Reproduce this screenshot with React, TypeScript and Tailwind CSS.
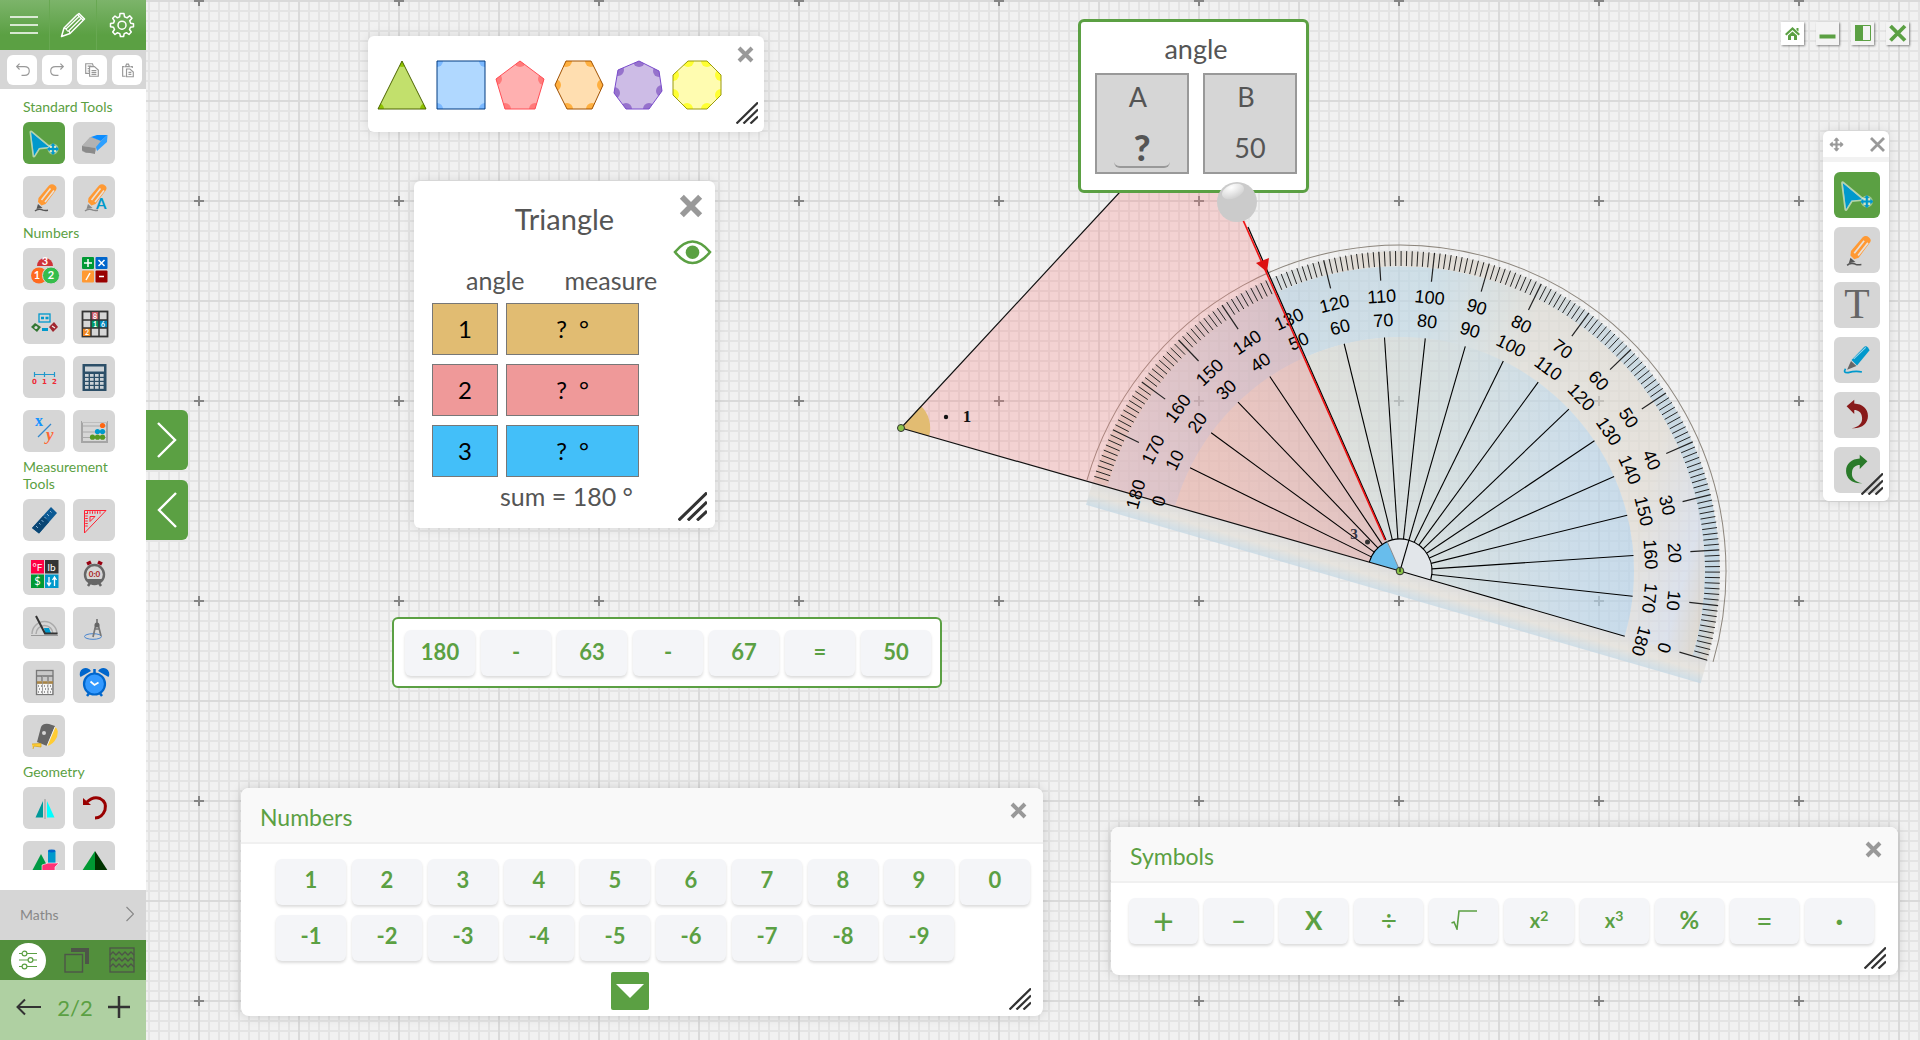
import { useState } from 'react';
import type { ReactNode } from 'react';
import clsx from 'clsx';

// --- GEOMETRY HELPERS ---
const polar = (r: number, deg: number) => {
  const a = (deg * Math.PI) / 180;
  return [r * Math.cos(a), -r * Math.sin(a)];
};

const halfRing = (r: number) => `M ${-r} 0 A ${r} ${r} 0 0 1 ${r} 0`;

// --- SHARED ICONS ---
const MoveGlyph = ({ color = '#0099cc' }: { color?: string }) => (
  <g fill="none" stroke={color} strokeWidth="1.8">
    <path d="M0 -5V5M-5 0H5" />
    <path d="M-2 -3.4L0 -5.6L2 -3.4ZM-2 3.4L0 5.6L2 3.4ZM-3.4 -2L-5.6 0L-3.4 2ZM3.4 -2L5.6 0L3.4 2Z" fill={color} strokeWidth="0.6" />
  </g>
);

const CursorIcon = () => (
  <>
    <g stroke="#ffffff" strokeOpacity="0.55" strokeWidth="3" strokeLinejoin="round" fill="#fff">
      <path d="M8 10L26 25L16 26L11 34Z" />
      <circle cx="30" cy="27" r="4" strokeOpacity="0.4" fillOpacity="0.6" />
    </g>
    <path d="M8 10L26 25L16 26L11 34Z" fill="#0099cc" />
    <g transform="translate(30 27)"><MoveGlyph /></g>
  </>
);

const PencilIcon = ({ tip = '#555555' }: { tip?: string }) => (
  <>
    <path d="M15 26L15.5 22L26 9.5Q29 7 32 9.5Q34.5 11.5 33 14L22.5 28L18.5 29.5Z" fill="#ff9933" />
    <path d="M18.5 24L27.5 12.5M22 26L31 14.5" stroke="#e8e0d8" strokeWidth="1.6" />
    <path d="M15 28L19.5 32L13.5 33Z" fill={tip} />
    <path d="M12 35C14 33 18 33 20 34.2Q22 34.8 25 34.3" stroke={tip} strokeWidth="1.4" fill="none" />
  </>
);

const ResizeHandle = ({ className, size = 22 }: { className: string; size?: number }) => (
  <svg viewBox="0 0 22 22" width={size} height={size} className={clsx('absolute', className)}>
    <path d="M0.5 21.5L22 0.5M7.5 21.5L22 7.5M14.5 21.5L22 14.5" stroke="#333333" strokeWidth="2.3" />
  </svg>
);

const CloseButton = ({ className, size = 17, thin = false }: { className?: string; size?: number; thin?: boolean }) => (
  <button type="button" aria-label="Close" className={clsx('block', className)}>
    <svg viewBox="0 0 17 17" width={size} height={size}>
      <path d="M2 2L15 15M15 2L2 15" stroke="#999999" strokeWidth={thin ? 2.8 : 4} />
    </svg>
  </button>
);

// --- SIDEBAR TOOL ICONS (42 x 42 box) ---
const icons: Record<string, ReactNode> = {
  select: <CursorIcon />,
  eraser: (
    <>
      <path d="M9 24L18 15L29 19L24 25L22 31L13 31L9 29Z" fill="#a2a2a2" />
      <path d="M9 24L22 26L22 32L12 30L9 28Z" fill="#8a8a8a" />
      <path d="M17 15L28 19L23 26L9 24Z" fill="#b2b2b2" />
      <path d="M18 15L24 13H34.500L28 19Z" fill="#0d8dff" />
      <path d="M28 19L34.500 13L34 20L24 29L23 25Z" fill="#2ea0ff" />
    </>
  ),
  pencil: <PencilIcon />,
  pencilText: (
    <>
      <PencilIcon tip="#888888" />
      <text x="23" y="33" fontSize="15" fontWeight="700" fill="#0099cc" fontFamily="Lato, sans-serif">A</text>
    </>
  ),
  balls: (
    <>
      <path d="M14 18A8 8 0 0 1 30 18Z" fill="#d03238" />
      <circle cx="16" cy="27.5" r="8" fill="#ff6a1f" />
      <circle cx="28" cy="27.5" r="8.5" fill="#35bd4b" stroke="#d6d6d6" />
      <g fill="#fff" fontFamily="Lato, sans-serif" fontSize="11" fontWeight="700" textAnchor="middle">
        <text x="22" y="17">3</text>
        <text x="14" y="31">1</text>
        <text x="28" y="31">2</text>
      </g>
    </>
  ),
  operators: (
    <>
      <rect x="9" y="9" width="12" height="12" rx="1" fill="#009933" />
      <rect x="22.5" y="9" width="12" height="12" rx="1" fill="#0066cc" />
      <rect x="9" y="22.5" width="12" height="12" rx="1" fill="#ff9933" />
      <rect x="22.5" y="22.5" width="12" height="12" rx="1" fill="#990000" />
      <path d="M15 11V19M11 15H19M25.5 12L31.5 18M31.5 12L25.5 18M17 25L13 32M26 28.5H31" stroke="#fff" strokeWidth="1.5" />
    </>
  ),
  robots: (
    <>
      <rect x="16" y="12" width="11" height="8" fill="none" stroke="#0099cc" strokeWidth="1.3" />
      <path d="M18 16H21M22.5 16H25.5" stroke="#0099cc" strokeWidth="2.5" />
      <path d="M19 27.5H25" stroke="#0099cc" strokeWidth="3" />
      <path d="M8 25L12 21L18 25L14 30Z" fill="#337733" />
      <circle cx="13" cy="25.5" r="1.6" fill="#ddd" />
      <path d="M26 25L31 20L35 25L30 30Z" fill="#a12830" />
      <path d="M29 24L32 26" stroke="#eee" strokeWidth="1.2" />
    </>
  ),
  sudoku: (
    <>
      <rect x="9.5" y="9.5" width="25" height="25" fill="#d6d6d6" stroke="#333" strokeWidth="1.8" />
      <rect x="18" y="10" width="8" height="8" fill="#c85864" />
      <rect x="18" y="18" width="8" height="8" fill="#009966" />
      <rect x="26" y="18" width="8" height="8" fill="#0088bb" />
      <rect x="10" y="26" width="8" height="8" fill="#ee8822" />
      <path d="M18 10V34M26 10V34M10 18H34M10 26H34" stroke="#333" strokeWidth="1.5" />
      <g fill="#fff" fontFamily="Lato, sans-serif" fontSize="7" fontWeight="700" textAnchor="middle">
        <text x="22" y="16.5">8</text>
        <text x="22" y="24.5">1</text>
        <text x="30" y="24.5">6</text>
        <text x="14" y="32.5">2</text>
      </g>
    </>
  ),
  numberLine: (
    <>
      <path d="M11 18.5H32M11.5 16V21M21.5 16V21M31.5 16V21" stroke="#2299cc" strokeWidth="1.2" />
      <g fill="#ee2a35" fontFamily="'DejaVu Sans', sans-serif" fontSize="7" fontWeight="700" textAnchor="middle">
        <text x="11.5" y="28">0</text>
        <text x="21.5" y="28">1</text>
        <text x="31.5" y="28">2</text>
      </g>
    </>
  ),
  calculator: (
    <>
      <rect x="9.5" y="8" width="24" height="27" fill="#2c4f68" />
      <rect x="12" y="10.5" width="19" height="5" fill="#ccd2d6" />
      {[0, 1, 2, 3].map((r) =>
        [0, 1, 2, 3].map((c) => <rect key={`${r}${c}`} x={12 + c * 5} y={18 + r * 4} width="3.6" height="2.8" fill="#ccd2d6" />)
      )}
    </>
  ),
  fraction: (
    <>
      <path d="M15 27L28 14" stroke="#3388cc" strokeWidth="1.2" />
      <text x="12" y="16" fontSize="16" fontWeight="700" fill="#1493ff" fontFamily="Liberation Serif, serif">x</text>
      <text x="23" y="30" fontSize="17" fontStyle="italic" fontWeight="700" fill="#ff6633" fontFamily="Liberation Serif, serif">y</text>
    </>
  ),
  abacus: (
    <>
      <rect x="9" y="12" width="25" height="20" fill="#d6d6d6" stroke="#a5a5a5" strokeWidth="2" />
      <path d="M9 11H34" stroke="#d6d6d6" strokeWidth="3" />
      <path d="M10 16H33M10 22H33M10 27.5H33" stroke="#aaa" />
      <circle cx="29.5" cy="15.5" r="2.6" fill="#ff6611" />
      <circle cx="24.5" cy="21.5" r="2.6" fill="#0099cc" />
      <circle cx="29.5" cy="21.5" r="2.6" fill="#0099cc" />
      <circle cx="19.5" cy="27.2" r="2.6" fill="#559922" />
      <circle cx="24.5" cy="27.2" r="2.6" fill="#559922" />
      <circle cx="29.5" cy="27.2" r="2.6" fill="#559922" />
    </>
  ),
  ruler: (
    <>
      <path d="M9 29L28 8L34 14L16 34.5Z" fill="#0c5a94" />
      <path d="M9 29L20 17L26 23L16 34.5Z" fill="#0a4674" />
      <path d="M13 27L15 29M16 24L17.5 25.5M18.5 21L20.5 23M21.5 18L23 19.5M24 15L26 17M27 12L28.5 13.5" stroke="#8ab4d4" />
    </>
  ),
  setSquare: (
    <>
      <path d="M11.5 11.5H33L11.5 34Z" fill="none" stroke="#ff2233" />
      <path d="M14 13.5H28" stroke="#ff2233" strokeWidth="2.5" strokeDasharray="1 1.5" />
      <path d="M13.5 14V29" stroke="#ff2233" strokeWidth="2.5" strokeDasharray="1 1.5" />
      <path d="M17 17.5H22L17 22.5Z" fill="none" stroke="#ff2233" />
    </>
  ),
  converter: (
    <>
      <rect x="8" y="7" width="13" height="13.5" fill="#ff0044" />
      <rect x="22" y="7" width="13.5" height="13.5" fill="#333333" />
      <rect x="8" y="21.5" width="13" height="13.5" fill="#009933" />
      <rect x="22" y="21.5" width="13.5" height="13.5" fill="#0099cc" />
      <g fill="#fff" fontFamily="Lato, sans-serif" fontSize="10" textAnchor="middle">
        <text x="14.5" y="17.5">°F</text>
        <text x="28.5" y="17.5">lb</text>
        <text x="14.5" y="32" fontSize="11">$</text>
      </g>
      <path d="M26 24V32M24 29.5L26 32.5L28 29.5M31.5 33V25M29.5 27L31.5 24L33.5 27" stroke="#fff" strokeWidth="1.3" fill="none" />
    </>
  ),
  stopwatch: (
    <>
      <path d="M14 11L18 9M29 11L25 9" stroke="#990011" strokeWidth="3.5" />
      <path d="M15 33L17 30M28 33L26 30" stroke="#666" strokeWidth="2.5" />
      <circle cx="21.5" cy="21.5" r="9.5" fill="#d6d6d6" stroke="#666" strokeWidth="2.4" />
      <path d="M13 26H30A9.5 9.5 0 0 1 13 26Z" fill="#666" />
      <text x="21.5" y="24" fontSize="8" fontWeight="700" textAnchor="middle" fill="#aa2222" fontFamily="Lato, sans-serif">0:0</text>
    </>
  ),
  protractor: (
    <>
      <path d="M9 27A12.5 12.5 0 0 1 34 27M13 27A8.5 8.5 0 0 1 30 27" fill="none" stroke="#aaaaaa" strokeWidth="1.5" />
      <path d="M21 21H26L28 26H22Z" fill="#0099cc" />
      <path d="M13 9L22 26.5H34.5" fill="none" stroke="#333" strokeWidth="2" />
      <path d="M8 28.5H35" stroke="#999" />
    </>
  ),
  compass: (
    <>
      <ellipse cx="20" cy="29.5" rx="8.5" ry="2.8" fill="none" stroke="#4a86d0" />
      <path d="M24 12V16M23 17L20 30M25 17L28 29M21 22H27" stroke="#777" strokeWidth="1.7" />
      <circle cx="24" cy="18" r="2.5" fill="#666" />
    </>
  ),
  probability: (
    <>
      <rect x="13.5" y="9.5" width="16.5" height="24" fill="#c8c8c8" stroke="#777" strokeWidth="1.3" />
      <path d="M14 15H30M19 15V20M25 15V20" stroke="#777" strokeWidth="1.3" />
      <path d="M14 21.5H30" stroke="#a98445" strokeWidth="2.5" />
      <rect x="14.5" y="23" width="14.5" height="10" fill="#f6f6f6" />
      <path d="M15 25H29M16 28H29M15 31H29" stroke="#444" strokeDasharray="1 2" />
      <path d="M19.5 15V33M25 15V33" stroke="#999" strokeWidth="0.8" />
    </>
  ),
  clock: (
    <>
      <path d="M7.5 16A6 6 0 0 1 18 10ZM35.5 16A6 6 0 0 0 25 10Z" fill="#0066cc" />
      <path d="M14 35L17 31M29 35L26 31M21.5 8V12" stroke="#0066cc" strokeWidth="2.5" />
      <circle cx="21.5" cy="23" r="10.5" fill="#3399ff" stroke="#0066cc" strokeWidth="2.2" />
      <path d="M17.5 20.5L21.5 24L25.5 21.5" fill="none" stroke="#fff" strokeWidth="1.8" />
    </>
  ),
  tape: (
    <>
      <path d="M18 12Q20 8 26 9L32 11L24 31L14 27Z" fill="#666" />
      <path d="M32 12Q36 14 34 22Q30 30 24 31Z" fill="#ffcc33" />
      <path d="M32 12L24 31" stroke="#eee" />
      <circle cx="21" cy="18" r="2" fill="#d6d6d6" />
      <path d="M9 29L18 28.5V32L11 31L10 34" fill="#ffcc33" stroke="#d8a822" strokeWidth="0.8" />
    </>
  ),
  reflect: (
    <>
      <path d="M12.5 30.5L20 14V30.5Z" fill="#009999" />
      <path d="M31.5 30.5L24 14V30.5Z" fill="#00ffff" />
      <path d="M22 12V32" stroke="#aaa" strokeWidth="1.5" />
    </>
  ),
  rotate: (
    <>
      <path d="M14 15Q20 9 27 11.5Q34 15 32 23Q29 31 22 31" fill="none" stroke="#990000" strokeWidth="3" />
      <path d="M10 11V18L18 18Z" fill="#990000" />
    </>
  ),
  solids: (
    <>
      <path d="M9 30L18 13L27 30Z" fill="#009944" />
      <rect x="25" y="10" width="7.5" height="14" fill="#0099cc" />
      <ellipse cx="28.7" cy="10" rx="3.7" ry="1.4" fill="#0066cc" />
      <path d="M19 24L25 22H36L32 26V30H19Z" fill="#ff3377" stroke="#fff" strokeWidth="0.6" />
    </>
  ),
  pyramid: (
    <>
      <path d="M22 10L9 30H22Z" fill="#009933" />
      <path d="M22 10L35 30H22Z" fill="#003300" />
    </>
  ),
};

const groups = [
  { title: 'Standard Tools', tools: ['select', 'eraser', 'pencil', 'pencilText'] },
  { title: 'Numbers', tools: ['balls', 'operators', 'robots', 'sudoku', 'numberLine', 'calculator', 'fraction', 'abacus'] },
  {
    title: 'Measurement Tools',
    tools: ['ruler', 'setSquare', 'converter', 'stopwatch', 'protractor', 'compass', 'probability', 'clock', 'tape'],
  },
  { title: 'Geometry', tools: ['reflect', 'rotate', 'solids', 'pyramid'] },
];

// --- SIDEBAR ---
const Sidebar = () => {
  const [active, setActive] = useState('select');

  return (
    <aside className="flex h-full w-[146px] shrink-0 flex-col bg-white">
      <div className="grid h-[50px] shrink-0 grid-cols-3 bg-linear-to-b from-[#7cb46a] to-[#5ba043] to-70%">
        <button type="button" aria-label="Menu" className="grid place-items-center">
          <svg viewBox="0 0 28 18" className="h-[18px] w-7">
            <path d="M0 1H28M0 9H28M0 17H28" stroke="#fff" strokeWidth="1.6" />
          </svg>
        </button>
        <button type="button" aria-label="Edit" className="grid place-items-center border-x border-[#68a852]">
          <svg viewBox="0 0 26 26" className="size-[26px]" fill="none" stroke="#fff" strokeWidth="1.5" strokeLinejoin="round">
            <path d="M1.5 24.5L4 16L17 3L19 1.5L24.5 7L10 21.5Z" />
            <path d="M4 16L6 17L7.5 19L9.5 19.5L10 21.5M6 17L19 4.5M8.5 19L21.5 6M17.5 2.5L23 8" strokeWidth="1.2" />
          </svg>
        </button>
        <button type="button" aria-label="Settings" className="grid place-items-center">
          <svg viewBox="0 0 26 26" className="size-[26px]" fill="none" stroke="#fff" strokeWidth="1.5" strokeLinejoin="round">
            <path d="M11 1.5H15L15.5 4.8L18 5.9L20.7 3.8L23 6.2L20.7 8.8L21.7 11.2L24.5 11.7V14.8L21.5 15.3L20.5 17.5L22.3 20L20 22.5L17.4 20.7L15.2 21.6L14.6 24.5H11.4L10.8 21.6L8.5 20.7L6 22.5L3.7 20L5.5 17.5L4.5 15.3L1.5 14.8V11.6L4.5 11.1L5.4 8.9L3.7 6.3L6 4L8.4 5.8L10.6 4.9Z" />
            <circle cx="13" cy="13.2" r="4" />
          </svg>
        </button>
      </div>

      <div className="flex h-[39px] shrink-0 items-center gap-[5px] bg-[#d6d6d6] pl-[7px]">
        {[
          { name: 'Undo', art: <path d="M10 12H18Q23 12 23 16.5T18 21H15M13 9L10 12L13 15" /> },
          { name: 'Redo', art: <path d="M22 12H14Q9 12 9 16.5T14 21H17M19 9L22 12L19 15" /> },
          {
            name: 'Copy',
            art: <path d="M13 19H9V9H16L17 12M13 12H18L22 15.5V22H13ZM11 11.5H15M11 14H12.5M11 16.5H12.5M15 16H20M15 18H20M15 20H20" />,
          },
          {
            name: 'Paste',
            art: <path d="M14 22H11V12H13M19 12H21V13.5M14 12L15 9.5H17L18 12ZM15 14.5H18.5L22 17.5V22.5H15ZM17 18H20M17 20H20" />,
          },
        ].map((b) => (
          <button key={b.name} type="button" aria-label={b.name} className="size-[30px] rounded-md bg-white">
            <svg viewBox="0 0 31 31" className="size-full" fill="none" stroke="#999" strokeWidth="1.2">{b.art}</svg>
          </button>
        ))}
      </div>

      <nav className="mb-5 min-h-0 flex-1 overflow-hidden pt-[9px] pl-[23px]">
        {groups.map((g) => (
          <section key={g.title} className="mb-1.5">
            <h2 className="mb-[7px] w-[100px] text-[14px] leading-[17px] text-[#5ba043]">{g.title}</h2>
            <div className="grid grid-cols-[42px_42px] gap-x-2 gap-y-3">
              {g.tools.map((t) => (
                <button
                  key={t}
                  type="button"
                  aria-label={t}
                  onClick={() => setActive(t)}
                  className={clsx('size-[42px] rounded-md', active === t ? 'bg-[#5ba043]' : 'bg-[#d6d6d6]')}
                >
                  <svg viewBox="0 0 42 42" className="size-full">{icons[t]}</svg>
                </button>
              ))}
            </div>
          </section>
        ))}
      </nav>

      <button type="button" className="flex h-[50px] shrink-0 items-center justify-between bg-[#d6d6d6] pr-3 pb-0.5 pl-5 text-[14px] text-[#888888]">
        Maths
        <svg viewBox="0 0 8 16" className="h-4 w-2" fill="none" stroke="#888" strokeWidth="1.2"><path d="M0.5 1L7.5 8L0.5 15" /></svg>
      </button>

      <div className="grid h-10 shrink-0 grid-cols-[56px_42px_48px] items-center justify-items-center bg-[#528f3c]">
        <button type="button" aria-label="Tools" className="grid size-[35px] place-items-center rounded-full bg-white">
          <svg viewBox="0 0 20 20" className="size-5" fill="none" stroke="#5ba043" strokeWidth="1.2">
            <path d="M1 3.5H4M9 3.5H19M1 10H10M15 10H19M1 16.5H4M9 16.5H19" />
            <circle cx="6.5" cy="3.5" r="2.4" /><circle cx="12.5" cy="10" r="2.4" /><circle cx="6.5" cy="16.5" r="2.4" />
          </svg>
        </button>
        <button type="button" aria-label="Layers">
          <svg viewBox="0 0 26 26" className="size-[26px]">
            <path d="M7 1H25V17H21V5H7Z" fill="#4d5548" />
            <rect x="1" y="7.5" width="17.5" height="17.5" fill="none" stroke="#4d5548" strokeWidth="1.4" />
          </svg>
        </button>
        <button type="button" aria-label="Backgrounds">
          <svg viewBox="0 0 26 26" className="size-[26px]" fill="none" stroke="#4d5548" strokeWidth="1.3">
            <rect x="1" y="1" width="24" height="24" />
            <path d="M1 8L4 5L7 8L10 5L13 8L16 5L19 8L22 5L25 8M1 14L4 11L7 14L10 11L13 14L16 11L19 14L22 11L25 14M1 20L4 17L7 20L10 17L13 20L16 17L19 20L22 17L25 20" />
          </svg>
        </button>
      </div>

      <div className="flex h-[60px] shrink-0 items-center justify-between bg-[#afd0a2] px-4 pb-1.5">
        <button type="button" aria-label="Previous page">
          <svg viewBox="0 0 26 18" className="h-[18px] w-[26px]" fill="none" stroke="#333" strokeWidth="2"><path d="M1 9H25M9 1.5L1.5 9L9 16.5" /></svg>
        </button>
        <span className="text-[22px] text-[#5ba043]">2/2</span>
        <button type="button" aria-label="Add page">
          <svg viewBox="0 0 22 22" className="size-[22px]" stroke="#333" strokeWidth="2.5"><path d="M11 0V22M0 11H22" /></svg>
        </button>
      </div>
    </aside>
  );
};

// --- PROTRACTOR ---
const TILT = 16.2;
const ARM = 130; // the red arm runs along this division
const ticks = Array.from({ length: 180 }, (_, i) => i).filter((d) => d !== ARM);
const tens = Array.from({ length: 19 }, (_, i) => i * 10);

const Protractor = () => (
  <g transform={`translate(1400 571) rotate(${TILT})`}>
    {ticks.map((d) => {
      const long = d % 10 === 0;
      const [x1, y1] = polar(320, d);
      const [x2, y2] = polar(long ? 291 : 305, d);
      return <line key={d} x1={x1} y1={y1} x2={x2} y2={y2} stroke="#222" strokeWidth={long ? 1.2 : 0.9} />;
    })}
    {tens.filter((d) => d !== ARM && d !== 180).map((d) => {
      const [x1, y1] = polar(d === 90 ? 0 : 32, d);
      const [x2, y2] = polar(234, d);
      return <line key={d} x1={x1} y1={y1} x2={x2} y2={y2} stroke="#000" strokeWidth="1.1" />;
    })}
    <g fontFamily="'Liberation Sans Narrow', 'Liberation Sans', sans-serif" fontSize="18" textAnchor="middle" fill="#000">
      {tens.map((d) => (
        <g key={d} transform={`rotate(${90 - d})`}>
          <text x="0" y="-269">{d}</text>
          <text x="0" y="-245">{180 - d}</text>
        </g>
      ))}
    </g>
    <path d={halfRing(32)} fill="none" stroke="#000" strokeWidth="1.1" />
    <line x1="0" y1="0" x2="32" y2="0" stroke="#000" />
  </g>
);

// --- GRID, TRIANGLE AND PROTRACTOR DRAWING ---
const CanvasArt = () => (
  <svg className="absolute inset-0 size-full">
    <defs>
      <pattern id="minor" width="10" height="10" patternUnits="userSpaceOnUse">
        <path d="M0 1H10M9 0V10" stroke="#e4e4e4" strokeWidth="2" />
      </pattern>
      <pattern id="major" width="100" height="100" patternUnits="userSpaceOnUse">
        <path d="M0 1H100M99 0V100" stroke="#dadada" strokeWidth="2" />
      </pattern>
      <pattern id="cross" x="100" y="-100" width="200" height="200" patternUnits="userSpaceOnUse">
        <path d="M94 101H104M99 96V106" stroke="#868686" strokeWidth="2" />
      </pattern>
      <linearGradient id="band" gradientUnits="userSpaceOnUse" x1="-305" y1="0" x2="305" y2="0">
        <stop offset="0" stopColor="#cfdbe2" />
        <stop offset="0.2" stopColor="#bcd2e0" />
        <stop offset="0.42" stopColor="#c0d8e4" />
        <stop offset="0.6" stopColor="#dedcd4" />
        <stop offset="0.85" stopColor="#e1dcd3" />
        <stop offset="0.95" stopColor="#d3dbea" />
        <stop offset="1" stopColor="#d7cfc2" />
      </linearGradient>
      <linearGradient id="rim" gradientUnits="userSpaceOnUse" x1="-320" y1="0" x2="320" y2="0">
        <stop offset="0" stopColor="#dcd2c2" />
        <stop offset="0.14" stopColor="#c2d4de" />
        <stop offset="0.3" stopColor="#ddd5ca" />
        <stop offset="0.5" stopColor="#dbd6cd" />
        <stop offset="0.7" stopColor="#bfd2dc" />
        <stop offset="0.97" stopColor="#b3cee0" />
        <stop offset="1" stopColor="#d2c8b9" />
      </linearGradient>
      <linearGradient id="core" gradientUnits="userSpaceOnUse" x1="-234" y1="0" x2="234" y2="-100">
        <stop offset="0" stopColor="#e0dacd" />
        <stop offset="0.35" stopColor="#d4d8d4" />
        <stop offset="0.55" stopColor="#cbd8da" />
        <stop offset="0.8" stopColor="#bed6e6" />
        <stop offset="1" stopColor="#b4d1e9" />
      </linearGradient>
      <linearGradient id="strip" x1="0" y1="0" x2="0" y2="1">
        <stop offset="0" stopColor="#dadada" />
        <stop offset="0.5" stopColor="#e3dfd7" />
        <stop offset="1" stopColor="#c0d6e4" />
      </linearGradient>
      <radialGradient id="shine" cx="0.5" cy="0.2" r="0.8">
        <stop offset="0" stopColor="#fff" />
        <stop offset="1" stopColor="#d0d0d0" />
      </radialGradient>
    </defs>

    <rect width="100%" height="100%" fill="#f1f1f1" />
    <g transform="translate(-146 0)">
      <rect width="4000" height="3000" fill="url(#minor)" />
      <rect width="4000" height="3000" fill="url(#major)" />
      <rect width="4000" height="3000" fill="url(#cross)" />

      <g transform={`translate(1400 571) rotate(${TILT})`} fill="none">
        <g opacity="0.68">
          <path d={halfRing(312)} stroke="url(#rim)" strokeWidth="15" />
          <path d={halfRing(269)} stroke="url(#band)" strokeWidth="71" />
          <path d={`${halfRing(234)} Z`} fill="url(#core)" />
          <rect x="-320" y="0" width="640" height="24" fill="url(#strip)" />
        </g>
        <path d={halfRing(326)} stroke="#8c857c" strokeWidth="1" />
        <path d={`${halfRing(32)} Z`} fill="#e2e6ea" />
      </g>

      <path d="M901 428L1196 110L1400 571Z" fill="#f88383" fillOpacity="0.28" />
      <path d="M901 428L921 406A30 30 0 0 1 929 436Z" fill="#e2bc72" />
      <path d="M1400 571L1369 562A32 32 0 0 1 1387 542Z" fill="#68bdec" />
      <path d="M1400 571L901 428L1196 110" fill="none" stroke="#111" strokeWidth="1.2" />

      <Protractor />

      <path d="M1248 227L1386 540" stroke="#000" strokeWidth="1.2" />
      <path d="M1235 202L1385 540" stroke="#ee1111" strokeWidth="1.6" />
      <path d="M1387 541L1400 571" stroke="#777" strokeWidth="0.8" />
      <path d="M1256 263L1269 258L1267 272Z" fill="#dd1111" />
      <circle cx="901" cy="428" r="3.5" fill="#8bc34a" stroke="#333" />
      <circle cx="1400" cy="571" r="3.8" fill="#8bc34a" stroke="#333" />
      <path d="M1400 568V572" stroke="#000" />
      <g fontFamily="'Liberation Serif', serif" fontWeight="700" fill="#111" textAnchor="middle">
        <circle cx="946" cy="417" r="2.2" />
        <text x="967" y="422" fontSize="17">1</text>
        <circle cx="1367.5" cy="542" r="2.5" fill="#333" />
        <text x="1354" y="539" fontSize="15" fill="#33333f">3</text>
      </g>
    </g>
  </svg>
);

// --- FLOATING WIDGETS ---
const polygons = [
  { id: 'tri', points: '25,1 49,49 1,49', fill: '#c2e06c', corner: '#8fc400', stroke: '#4c6400' },
  { id: 'sq', points: '1,1 49,1 49,49 1,49', fill: '#b0d8ff', corner: '#7ab8ff', stroke: '#003a80' },
  { id: 'pent', points: '25,1 49,19 40,49 10,49 1,19', fill: '#ffb0b0', corner: '#ff7a7a', stroke: '#ff4d55' },
  { id: 'hex', points: '12,1 37,1 49,25 38,49 13,49 1,25', fill: '#ffdeb0', corner: '#ffb040', stroke: '#a05000' },
  { id: 'hept', points: '26,1 46,11 49,31 36,49 13,49 1,33 5,10', fill: '#cdbce6', corner: '#9672cc', stroke: '#7a4ccc' },
  { id: 'oct', points: '16,1 35,1 49,15 49,35 35,49 15,49 1,35 1,15', fill: '#fffcb0', corner: '#ffff33', stroke: '#9a9a10' },
];

const ShapesPanel = () => (
  <div className="absolute top-9 left-[222px] flex rounded-md bg-white pt-6 pr-[42px] pb-[22px] pl-[9px] shadow-[0_0_12px_rgba(0,0,0,0.12)]">
    <div className="flex gap-[9px]">
      {polygons.map((p) => (
        <button key={p.id} type="button" aria-label={p.id}>
          <svg viewBox="0 0 50 50" className="size-[50px]">
            <clipPath id={p.id}><polygon points={p.points} /></clipPath>
            <polygon points={p.points} fill={p.fill} />
            <g clipPath={`url(#${p.id})`} fill={p.corner}>
              {p.points.split(' ').map((pt) => {
                const [x, y] = pt.split(',');
                return <circle key={pt} cx={x} cy={y} r="6" />;
              })}
            </g>
            <polygon points={p.points} fill="none" stroke={p.stroke} strokeWidth="1" />
          </svg>
        </button>
      ))}
    </div>
    <CloseButton className="absolute top-2.5 right-2.5" />
    <ResizeHandle className="right-1.5 bottom-2" />
  </div>
);

const angleRows = [
  { n: 1, color: 'bg-[#e1bc72]' },
  { n: 2, color: 'bg-[#ef9999]' },
  { n: 3, color: 'bg-[#43bff9]' },
];

const TrianglePanel = () => (
  <div className="absolute top-[181px] left-[268px] h-[347px] w-[301px] rounded-md bg-white pt-5 shadow-[0_0_12px_rgba(0,0,0,0.12)]">
    <h2 className="text-center text-[29px] leading-9 text-[#555555]">Triangle</h2>
    <div className="mt-[29px] flex gap-10 pl-[52px] text-[25px] leading-7 text-[#555555]">
      <span>angle</span>
      <span>measure</span>
    </div>
    <table className="ml-[10px] border-separate border-spacing-x-2 border-spacing-y-[9px] text-center text-[24px] leading-6 text-black">
      <tbody>
        {angleRows.map((r) => (
          <tr key={r.n} className="h-[52px]">
            <td className={clsx('w-[66px] border border-[#777] p-0', r.color)}>{r.n}</td>
            <td className={clsx('w-[133px] border border-[#777] p-0', r.color)}>
              <span className="mr-3">?</span>°
            </td>
          </tr>
        ))}
      </tbody>
    </table>
    <p className="-mt-1 pl-[86px] text-[25px] leading-7 text-[#555555]">sum = 180 °</p>
    <CloseButton className="absolute top-[13px] right-3" size={24} />
    <button type="button" aria-label="Show measures" className="absolute top-[59px] right-[3px]">
      <svg viewBox="0 0 39 25" className="h-[25px] w-[39px]">
        <path d="M2 12Q19.5 -9 37 12Q19.5 34 2 12Z" fill="none" stroke="#5ba043" strokeWidth="2.6" />
        <circle cx="19.5" cy="12.2" r="6.8" fill="#5ba043" />
      </svg>
    </button>
    <ResizeHandle className="right-2 bottom-[7px]" size={29} />
  </div>
);

const AnglePanel = () => (
  <div className="absolute top-[19px] left-[932px] h-[174px] w-[231px] rounded-md border-3 border-[#5ba043] bg-white pr-[9px] pl-3.5">
    <h2 className="pt-[11px] text-center text-[27px] leading-8 text-[#555555]">angle</h2>
    <div className="mt-2 grid grid-cols-2 gap-3.5 text-[27px] leading-8 text-[#555555]">
      <label className="flex h-[101px] flex-col items-center justify-between border-2 border-[#999] bg-[#d6d6d6] pt-1.5 pb-1">
        <span className="pr-2">A</span>
        <input defaultValue="?" className="h-10 w-14 rounded-md border-b-2 border-[#999] text-center text-[36px] leading-9 font-black outline-none" />
      </label>
      <div className="flex h-[101px] flex-col items-center justify-between border-2 border-[#999] bg-[#d6d6d6] pt-1.5 pb-2">
        <span className="pr-2">B</span>
        <span>50</span>
      </div>
    </div>
  </div>
);

const Tile = ({ children, className }: { children: ReactNode; className?: string }) => (
  <button
    type="button"
    className={clsx('grid place-items-center rounded-md bg-[#f4f5f8] font-bold text-[#5ba043] shadow-[0_2px_3px_rgba(0,0,0,0.14)]', className)}
  >
    {children}
  </button>
);

const Equation = () => (
  <div className="absolute top-[617px] left-[246px] flex gap-1.5 rounded-md border-2 border-[#5ba043] bg-white pt-[11px] pr-[9px] pb-2.5 pl-[11px]">
    {['180', '-', '63', '-', '67', '=', '50'].map((t, i) => (
      <Tile key={i} className="h-[46px] w-[70px] pb-1 text-[22px]">{t}</Tile>
    ))}
  </div>
);

const NumbersPanel = () => (
  <div className="absolute top-[788px] left-[95px] w-[802px] overflow-hidden rounded-lg bg-white pb-1.5 shadow-[0_0_12px_rgba(0,0,0,0.16)]">
    <header className="flex h-[56px] items-center border-b-2 border-[#f0f0f0] bg-[#f9f9f9] px-[19px] pt-1 text-[23px] text-[#5ba043]">Numbers</header>
    <div className="grid grid-cols-[repeat(10,70px)] gap-x-1.5 gap-y-2.5 pt-[15px] pl-[35px]">
      {[1, 2, 3, 4, 5, 6, 7, 8, 9, 0, -1, -2, -3, -4, -5, -6, -7, -8, -9].map((n) => (
        <Tile key={n} className="h-[46px] pb-1.5 text-[22px]">{n}</Tile>
      ))}
    </div>
    <button type="button" aria-label="More numbers" className="mt-[11px] ml-[370px] grid size-[38px] place-items-center rounded-xs bg-[#5ba043]">
      <svg viewBox="0 0 28 14" className="h-3.5 w-7"><path d="M0 0H28L14 14Z" fill="#fff" /></svg>
    </button>
    <CloseButton className="absolute top-3.5 right-4" />
    <ResizeHandle className="right-3 bottom-1.5" />
  </div>
);

const symbols: { name: string; art: ReactNode }[] = [
  { name: 'plus', art: <span className="text-[36px] leading-8 font-normal">+</span> },
  { name: 'minus', art: <span className="text-[26px] leading-8">–</span> },
  { name: 'times', art: <span className="text-[26px] leading-8">X</span> },
  { name: 'divide', art: <span className="text-[28px] leading-8 font-normal">÷</span> },
  {
    name: 'square root',
    art: (
      <svg viewBox="0 0 26 20" className="h-5 w-[26px]" fill="none" stroke="#5ba043" strokeWidth="1.6">
        <path d="M0.5 13L3 12L6 19L8 1H26" />
      </svg>
    ),
  },
  { name: 'squared', art: <span className="text-[20px] leading-8">x<sup className="text-[14px]">2</sup></span> },
  { name: 'cubed', art: <span className="text-[20px] leading-8">x<sup className="text-[14px]">3</sup></span> },
  { name: 'percent', art: <span className="text-[24px] leading-8">%</span> },
  { name: 'equals', art: <span className="text-[28px] leading-8 font-normal">=</span> },
  { name: 'point', art: <span className="text-[28px] leading-8">·</span> },
];

const SymbolsPanel = () => (
  <div className="absolute top-[827px] right-[22px] w-[787px] overflow-hidden rounded-lg bg-white pb-[31px] shadow-[0_0_12px_rgba(0,0,0,0.16)]">
    <header className="flex h-[56px] items-center border-b-2 border-[#f0f0f0] bg-[#f9f9f9] px-[19px] pt-1 text-[23px] text-[#5ba043]">Symbols</header>
    <div className="grid grid-cols-10 gap-1.5 pt-[15px] pr-6 pl-[18px]">
      {symbols.map((s) => (
        <Tile key={s.name} className="h-[46px] pb-0.5">{s.art}</Tile>
      ))}
    </div>
    <CloseButton className="absolute top-3.5 right-4" />
    <ResizeHandle className="right-3 bottom-1.5" />
  </div>
);

const WindowControls = () => (
  <div className="absolute top-[22px] right-[11px] flex gap-3">
    {[
      { name: 'Home', art: <path d="M4 12L11.5 5L19 12L17.5 13.5L11.5 8L5.5 13.5ZM7 13.5L11.5 9.5L16 13.5V18H13V14H10V18H7ZM15.5 6H17.5V9.5L15.5 8Z" /> },
      { name: 'Minimise', art: <path d="M3.5 12.5H19.5V16.5H3.5Z" /> },
      { name: 'Split view', art: <><path d="M4 3H12V19H4Z" /><path d="M4.5 3.5H19.5V18.5H4.5Z" fill="none" stroke="#5ba043" /></> },
      { name: 'Exit', art: <path d="M4.5 4L19 18.5M19 4L4.5 18.5" stroke="#5ba043" strokeWidth="3.8" /> },
    ].map((b, i) => (
      <button
        key={b.name}
        type="button"
        aria-label={b.name}
        className={clsx('size-[23px] shadow-[1px_1px_2px_rgba(0,0,0,0.45)]', i === 0 ? 'bg-white' : 'bg-[#f3f3f3]')}
      >
        <svg viewBox="0 0 23 23" className="size-full" fill="#5ba043">{b.art}</svg>
      </button>
    ))}
  </div>
);

const quickTools: { name: string; art: ReactNode }[] = [
  { name: 'Select', art: <CursorIcon /> },
  { name: 'Pencil', art: <PencilIcon /> },
  {
    name: 'Text',
    art: <text x="21" y="33" fontSize="38" textAnchor="middle" fill="#666" fontFamily="'Liberation Serif', serif">T</text>,
  },
  {
    name: 'Highlighter',
    art: (
      <>
        <path d="M16 21L27 9.5Q29 7.5 31 9.5L32.5 12L21 26Z" fill="#0099cc" />
        <path d="M18 20L29 9.5" stroke="#9ad4ea" />
        <path d="M15.5 22L20.5 26.5L12 30Z" fill="#666" />
        <path d="M10.5 29Q8 33 13 32.5Q20 30.5 25.5 32" stroke="#0099cc" strokeWidth="1.5" fill="none" />
      </>
    ),
  },
  { name: 'Undo', art: <path d="M11.5 13L18.5 7V10.5C26 11 31 15 31 22C31 29 25 34 16 33C23 32 26.5 28 25.5 22.5C25 18.5 22 16.5 18.5 16.5V20Z" fill="#881a1a" /> },
  { name: 'Redo', art: <path d="M30.5 13L23.5 7V10.5C16 11 11 15 11 22C11 29 17 34 26 33C19 32 15.5 28 16.5 22.5C17 18.5 20 16.5 23.5 16.5V20Z" fill="#2a7a2a" /> },
];

const QuickToolbar = () => {
  const [active, setActive] = useState('Select');

  return (
    <div className="absolute top-[131px] right-[31px] w-[66px] overflow-hidden rounded-md bg-[#f2f2f2] shadow-[0_0_12px_rgba(0,0,0,0.12)]">
      <div className="mb-[5px] flex h-[26px] items-center justify-between bg-white pr-[3px] pl-1.5">
        <svg viewBox="-7.5 -7.5 15 15" className="size-[15px]"><g transform="scale(1.2)"><MoveGlyph color="#999999" /></g></svg>
        <CloseButton size={17} thin />
      </div>
      <div className="flex flex-col gap-[9px] bg-white pt-2.5 pr-[9px] pb-2 pl-[11px]">
        {quickTools.map((t) => (
          <button
            key={t.name}
            type="button"
            aria-label={t.name}
            onClick={() => setActive(t.name)}
            className={clsx('size-[46px] rounded-md', active === t.name ? 'bg-[#5ba043]' : 'bg-[#d6d6d6]')}
          >
            <svg viewBox="0 0 42 42" className="size-full">{t.art}</svg>
          </button>
        ))}
      </div>
      <ResizeHandle className="right-1.5 bottom-1.5" />
    </div>
  );
};

const DrawerTab = ({ name, d }: { name: string; d: string }) => (
  <button type="button" aria-label={name} className="grid h-[60px] w-[42px] place-items-center rounded-r-md bg-[#5ba043]">
    <svg viewBox="0 0 20 36" className="h-9 w-5" fill="none" stroke="#fff" strokeWidth="2.4"><path d={d} /></svg>
  </button>
);

export default function App() {
  return (
    <div className="flex h-screen w-full overflow-hidden font-['Lato',sans-serif]">
      <Sidebar />
      <main className="relative min-w-0 flex-1 overflow-hidden">
        <CanvasArt />
        <div className="absolute top-[410px] left-0 flex flex-col gap-2.5">
          <DrawerTab name="Expand" d="M1 1L18 18L1 35" />
          <DrawerTab name="Collapse" d="M19 1L2 18L19 35" />
        </div>
        <ShapesPanel />
        <TrianglePanel />
        <AnglePanel />
        {/* drag handle of the rotating arm */}
        <svg viewBox="0 0 40 40" className="absolute top-[182px] left-[1071px] size-10">
          <circle cx="20" cy="20" r="20" fill="#cbcbcb" />
          <ellipse cx="16" cy="9.5" rx="11.5" ry="7" transform="rotate(-22 16 9.5)" fill="url(#shine)" />
        </svg>
        <Equation />
        <NumbersPanel />
        <SymbolsPanel />
        <WindowControls />
        <QuickToolbar />
      </main>
    </div>
  );
}
